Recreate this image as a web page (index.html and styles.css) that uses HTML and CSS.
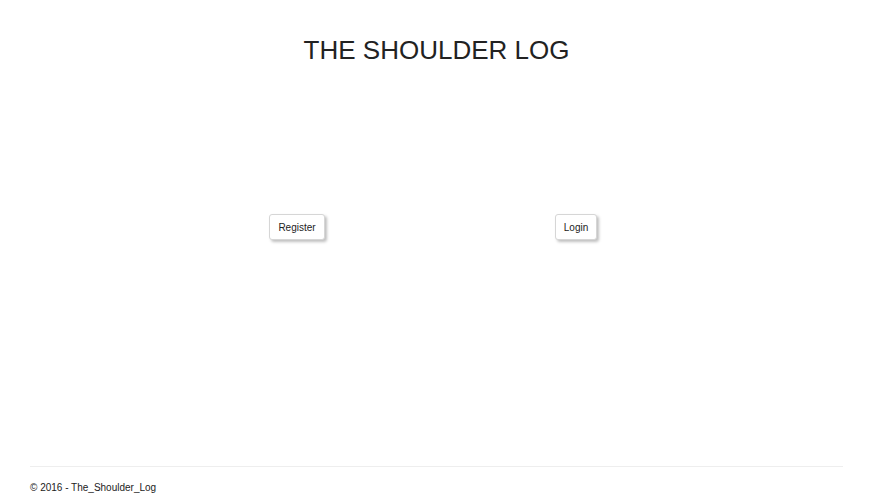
FILE: index.html
```html
<!DOCTYPE html>
<html>
<head>
<meta charset="utf-8">
<link rel="stylesheet" href="styles.css">
</head>
<body>
<div class="page">
  <h1 class="title">THE SHOULDER LOG</h1>
  <div class="actions">
    <div class="col"><button class="btn">Register</button></div>
    <div class="col"><button class="btn">Login</button></div>
  </div>
  <footer class="footer">
    <hr class="rule">
    <p class="copy">© 2016 - The_Shoulder_Log</p>
  </footer>
</div>
</body>
</html>
```
FILE: styles.css
```css
html, body {
  margin: 0;
  padding: 0;
  background: #fff;
}
body {
  font-family: "Liberation Sans", Arial, sans-serif;
  color: #333;
}
.page {
  height: 500px;
  display: flex;
  flex-direction: column;
  padding: 0 35px 0 30px;
  box-sizing: border-box;
}
.title {
  margin: 35px 0 0;
  text-align: center;
  font-weight: normal;
  font-size: 26px;
  line-height: 30px;
  color: #222;
}
.actions {
  display: flex;
  width: 558px;
  margin: 149px auto 0;
}
.col {
  flex: 1;
  display: flex;
  justify-content: center;
}
.btn {
  font-family: "Liberation Sans", Arial, sans-serif;
  font-size: 10px;
  color: #222;
  background: #fff;
  border: 1px solid #d6d6d6;
  border-radius: 3px;
  height: 26px;
  padding: 0 8px;
  box-shadow: 2px 2px 3px rgba(0,0,0,0.25);
}
.footer {
  margin-top: auto;
}
.rule {
  border: 0;
  border-top: 1px solid #eee;
  margin: 0;
}
.copy {
  margin: 15px 0 6px;
  font-size: 10px;
  line-height: 12px;
  color: #222;
}
```
